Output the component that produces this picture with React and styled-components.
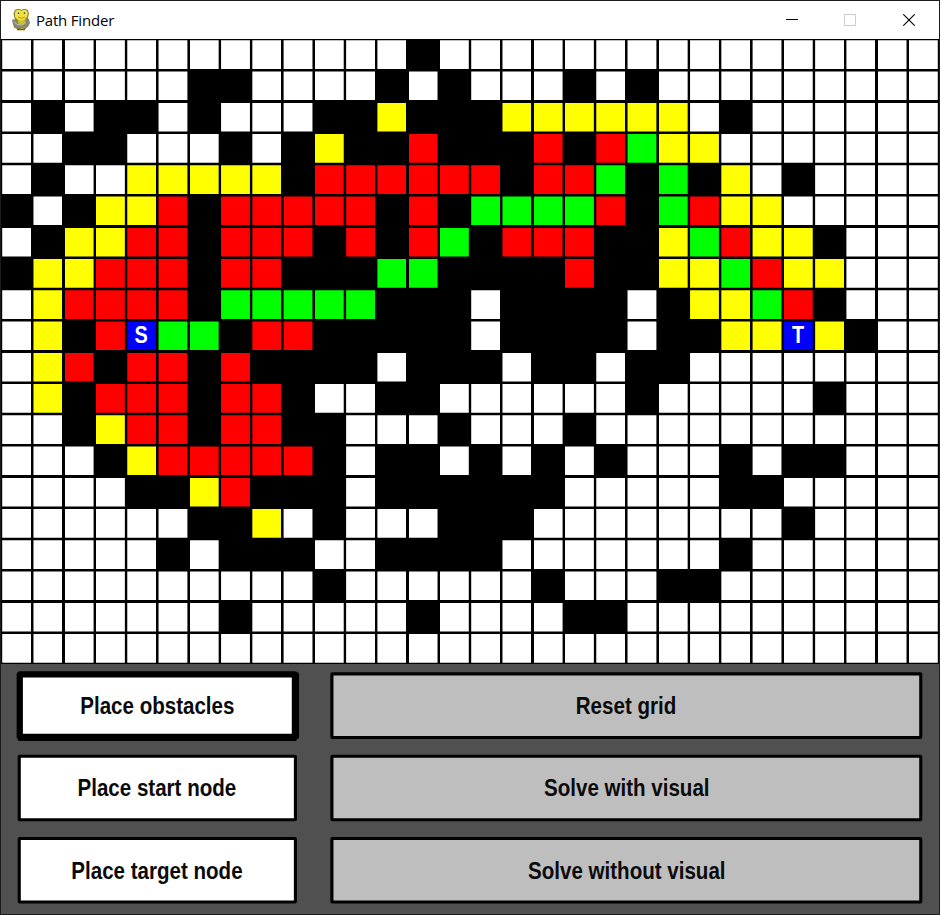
import React from 'react';
import styled, { createGlobalStyle } from 'styled-components';

const GlobalStyle = createGlobalStyle`
  *, *::before, *::after { box-sizing: border-box; }
  body { margin: 0; background: #1c1c1c; overflow: hidden; }
`;

const ROWS = [
  '.............#................',
  '......##....#.#...#.#.........',
  '.#.##.#...##Y###YYYYYY.#......',
  '..##...#.#Y##R###R#RGYY.......',
  '.#..YYYYY#RRRRRR#RRG#G#Y.#....',
  '#.#YYR#RRRRR#R#GGGGR#GRYY.....',
  '.#YYRR#RRR#R#RG#RRR##YGRYY#...',
  '#YYRRR#RR###GG####R##YYGRYY...',
  '.YRRRR#GGGGG###.####.#YYGR#...',
  '.Y#RSGG#RR#####.####.##YYTY#..',
  '.YR#RR#R####.###.##.##........',
  '.Y#RRR#RR#..##......#.....#...',
  '..#YRR#RR##...#...#...........',
  '...#YRRRRR#.##.#.#.#...#.##...',
  '....##YR###.######.....##.....',
  '......##Y.#...###........#....',
  '.....#.###..####.......#......',
  '..........#......#...##.......',
  '.......#.....#....##..........',
  '..............................',
];

const COLORS = {
  '.': '#ffffff',
  '#': '#000000',
  Y: '#ffff00',
  R: '#ff0000',
  G: '#00ff00',
  S: '#0000ff',
  T: '#0000ff',
};

const Window = styled.main`
  width: 940px;
  height: 915px;
  padding: 1px;
  display: flex;
  flex-direction: column;
  background: #1c1c1c;
`;

const TitleBar = styled.header`
  height: 38px;
  flex: none;
  display: flex;
  align-items: center;
  background: #fff;
  padding-left: 10px;
  padding-right: 1px;
`;

const Title = styled.h1`
  margin: 0 auto 0 5px;
  font: 400 15px/20px "Open Sans", "Noto Sans", sans-serif;
  letter-spacing: -0.2px;
  color: #000;
`;

const WindowButton = styled.button`
  width: 58.5px;
  height: 38px;
  padding: 0;
  border: 0;
  display: grid;
  place-items: center;
  background: transparent;
  color: ${(p) => (p.$muted ? '#cccccc' : '#000')};
`;

/* The client area is laid out at 900x840 and enlarged to the window size. */
const Client = styled.div`
  width: 900px;
  height: 840px;
  flex: none;
  transform: scale(1.04222, 1.04167);
  transform-origin: 0 0;
  background: #505050;
`;

const Grid = styled.div`
  height: 600px;
  display: grid;
  grid-template-columns: repeat(30, 30px);
  grid-auto-rows: 30px;
  background: #000;
`;

const Cell = styled.div`
  padding: 0.6px;
  background: ${(p) => p.$fill} content-box;
  box-shadow: inset 0 0 0 1.15px #000;
  display: grid;
  place-items: center;
  font: 700 22.5px/28px "Liberation Sans", Arial, sans-serif;
  color: #fff;
`;

const Controls = styled.div`
  display: grid;
  grid-template-columns: 268px 568px;
  grid-template-rows: repeat(3, 64px);
  column-gap: 32px;
  row-gap: 15px;
  padding: 8px 16px;
`;

const Button = styled.button`
  padding: 0;
  border: ${(p) => (p.$active ? 5 : 3)}px solid #000;
  border-radius: 2px;
  display: grid;
  place-items: center;
  background: ${(p) => (p.$action ? '#bebebe' : '#fff')};
  box-shadow: ${(p) =>
    p.$active ? '-1px 0 #000, 2px 0 #000, 0 -1px #000, 0 2px #000' : 'none'};
  font: 700 23.2px/28px "Liberation Sans", Arial, sans-serif;
  color: #0a0a0a;
  white-space: nowrap;
`;

const Label = styled.span`
  display: block;
  transform: scaleX(0.85);
`;

const Snake = () => (
  <svg width="20" height="22" viewBox="0 0 20 22" aria-hidden="true">
    <path d="M4 1l2-1h3l1.500 1 1.500-1h3l2 1.500 1 3-1 4 1 4-1 5-3 3H7l-4-2-1-4 2-4-1-3-.5-3z" fill="#8f8426" />
    <path d="M4 3l2-2h3l1.500 1L12 1h3l2 3-1 4-3 3H7L4 8z" fill="#efe23c" />
    <path d="M8 11l6-1 2 4-1 4-4 2-4-2z" fill="#dccf35" />
    <circle cx="7" cy="4" r="1.800" fill="#e4e6a8" />
    <circle cx="14" cy="4" r="1.800" fill="#e4e6a8" />
    <circle cx="7.500" cy="4.200" r=".9" fill="#59531c" />
    <circle cx="13.500" cy="4.200" r=".9" fill="#59531c" />
    <path d="M7 8l3.500 1.200L14 8" stroke="#c98f1c" fill="none" />
    <path d="M1 11l2-1 2 2 3 2 4-1 3-2 3-1 1 4-2 4-5 1H6l-4-3z" fill="#86867a" />
    <path d="M3 12.500l3 3 5 .5 4-2.500" stroke="#c4c4b8" fill="none" />
    <path d="M7 11l3 1.500L14 11v4l-4 1-3-2z" fill="#c9bd35" />
    <path d="M6 20.500h8" stroke="#6b621f" strokeWidth="1.500" />
  </svg>
);

const BUTTONS = [
  { label: 'Place obstacles', active: true },
  { label: 'Reset grid', action: true },
  { label: 'Place start node' },
  { label: 'Solve with visual', action: true },
  { label: 'Place target node' },
  { label: 'Solve without visual', action: true },
];

export default function App() {
  return (
    <>
      <GlobalStyle />
      <Window>
        <TitleBar>
          <Snake />
          <Title>Path Finder</Title>
          <WindowButton aria-label="Minimize">
            <svg width="12" height="12"><path d="M0 5.500h12" stroke="currentColor" /></svg>
          </WindowButton>
          <WindowButton aria-label="Maximize" $muted>
            <svg width="12" height="12"><path d="M.5.5h11v11H.5z" fill="none" stroke="currentColor" /></svg>
          </WindowButton>
          <WindowButton aria-label="Close">
            <svg width="12" height="12"><path d="M.3.3l11.400 11.400M11.700.3L.3 11.700" stroke="currentColor" strokeWidth="1.100" /></svg>
          </WindowButton>
        </TitleBar>
        <Client>
          <Grid>
            {ROWS.flatMap((row, y) =>
              [...row].map((c, x) => (
                <Cell key={`${x}-${y}`} $fill={COLORS[c]}>
                  {(c === 'S' || c === 'T') && <Label>{c}</Label>}
                </Cell>
              ))
            )}
          </Grid>
          <Controls>
            {BUTTONS.map((b) => (
              <Button key={b.label} $action={b.action} $active={b.active}>
                <Label>{b.label}</Label>
              </Button>
            ))}
          </Controls>
        </Client>
      </Window>
    </>
  );
}
